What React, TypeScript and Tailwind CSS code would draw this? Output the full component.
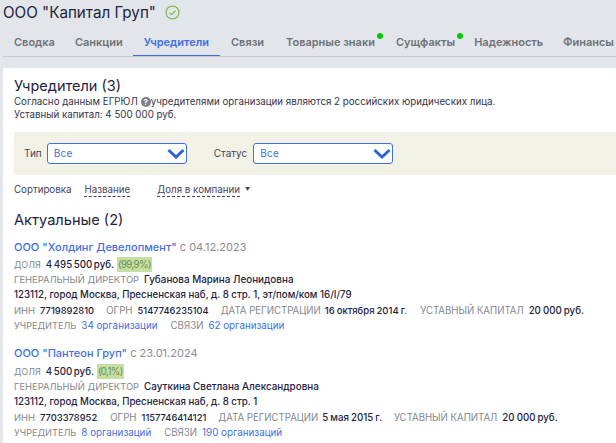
import React from "react";

const font = { fontFamily: "Inter, 'Noto Sans', sans-serif" };

function Tab({ label, active, dot, className }: { label: string; active?: boolean; dot?: boolean; className: string }) {
  return (
    <div className={`relative shrink-0 h-[29px] pt-[7px] text-[11px] leading-[16px] font-semibold whitespace-nowrap ${active ? "text-[#3f6fe0] border-b border-[#3f6fe0]" : "text-[#6e7378]"} ${className}`}>
      {label}
      {dot && <span className="absolute top-[6px] right-[-8px] w-[6px] h-[6px] rounded-full bg-[#00cc00]" />}
    </div>
  );
}

function Select() {
  return (
    <div className="flex items-center justify-between w-[140px] h-[21px] border border-[#3f6fe0] rounded-[3px] bg-white pl-[6px] pr-[1px] text-[10px] tracking-[0.3px] text-[#3f6fe0]">
      <span>Все</span>
      <svg width="18" height="11" viewBox="0 0 18 11" fill="none">
        <path d="M1.5 2 L9 9 L16.5 2" stroke="#2f64d8" strokeWidth="3" />
      </svg>
    </div>
  );
}

const L = ({ children, className = "text-[9.4px]" }: { children: React.ReactNode; className?: string }) => (
  <span className={`text-[#84878c] ${className}`}>{children}</span>
);
const V = ({ children, className = "" }: { children: React.ReactNode; className?: string }) => (
  <span className={`text-[#23233f] font-medium ${className}`}>{children}</span>
);
const A = ({ children, className = "" }: { children: React.ReactNode; className?: string }) => (
  <span className={`text-[#3f6fe0] ${className}`}>{children}</span>
);

function Row({ children, className = "" }: { children: React.ReactNode; className?: string }) {
  return <div className={`flex h-[15px] leading-[15px] whitespace-nowrap ${className}`}>{children}</div>;
}

export default function App() {
  return (
    <div style={font} className="w-[616px] h-[443px] overflow-hidden bg-[#e2e5e9] text-[#23233f]">
      <div className="flex items-center h-[25px] pl-[3px]">
        <span className="text-[15.2px] leading-[25px] whitespace-nowrap">ООО "Капитал Груп"</span>
        <svg className="ml-[9px]" width="15" height="15" viewBox="0 0 15 15" fill="none">
          <circle cx="7.5" cy="7.5" r="6.5" stroke="#6db33f" strokeWidth="1.1" />
          <path d="M4.6 7.6 L6.8 9.6 L10.5 5.6" stroke="#6db33f" strokeWidth="1.1" />
        </svg>
      </div>
      <div className="flex h-[32px] ml-[3px] pt-[2px] border-b border-[#c8cacd]">
        <Tab label="Сводка" className="ml-[11px]" />
        <Tab label="Санкции" className="ml-[20px]" />
        <Tab label="Учредители" active className="ml-[10px] px-[11px]" />
        <Tab label="Связи" className="ml-[11px]" />
        <Tab label="Товарные знаки" dot className="ml-[22px]" />
        <Tab label="Сущфакты" dot className="ml-[21px]" />
        <Tab label="Надежность" className="ml-[19px]" />
        <Tab label="Финансы" className="ml-[20px]" />
      </div>
      <div className="mt-[11px] ml-[3px] h-[376px] bg-white pl-[11px] pt-[8px]">
        <div className="text-[14.5px] leading-[20px]">Учредители (3)</div>
        <div className="flex items-center text-[9.75px] leading-[12px] h-[12px] whitespace-nowrap text-[#33334a]">
          Согласно данным ЕГРЮЛ
          <span className="inline-flex items-center justify-center w-[10px] h-[10px] rounded-full bg-[#7d8288] text-white text-[8px] font-bold ml-[3px]">?</span>
          учредителями организации являются 2 российских юридических лица.
        </div>
        <div className="text-[9.75px] leading-[12px] mt-[1px] text-[#33334a]">Уставный капитал: 4 500 000 руб.</div>

        <div className="flex items-center h-[43px] mt-[11px] bg-[#f1f1e6] text-[10px] text-[#44445a]">
          <span className="ml-[10px] mr-[5px]">Тип</span>
          <Select />
          <span className="ml-[27px] mr-[6px]">Статус</span>
          <Select />
        </div>

        <div className="flex items-center h-[14px] mt-[8px] text-[9.75px] text-[#44445a] whitespace-nowrap">
          <span>Сортировка</span>
          <span className="ml-[13px] leading-[12px] border-b border-dashed border-[#44445a]">Название</span>
          <span className="ml-[27px] leading-[12px] border-b border-dashed border-[#44445a]">Доля в компании</span>
          <span className="ml-[5px] text-[5px]">▼</span>
        </div>

        <div className="text-[14.6px] leading-[20px] mt-[13px]">Актуальные (2)</div>

        <div className="text-[9.7px] mt-[9px]">
          <div className="h-[17px] text-[11px] leading-[17px] whitespace-nowrap">
            <A className="font-medium">ООО "Холдинг Девелопмент"</A>
            <span className="text-[#8a8d92]"> с 04.12.2023</span>
          </div>
          <Row className="mt-[1px]">
            <L className="text-[9px]">ДОЛЯ</L>
            <V className="ml-[5px] [word-spacing:-1px]">4 495 500 руб.</V>
            <span className="ml-[3px] px-[1px] bg-[#c3e0a0] text-[#6b8a55] tracking-[-0.6px]">(99,9%)</span>
          </Row>
          <Row><L>ГЕНЕРАЛЬНЫЙ ДИРЕКТОР</L><V className="ml-[5px] text-[9.9px]">Губанова Марина Леонидовна</V></Row>
          <Row><V>123112, город Москва, Пресненская наб, д. 8 стр. 1, эт/пом/ком 16/I/79</V></Row>
          <Row className="mt-[1px]">
            <L>ИНН</L><V className="ml-[5px] text-[9.4px]">7719892810</V>
            <L className="ml-[12px]">ОГРН</L><V className="ml-[5px] text-[9.3px]">5147746235104</V>
            <L className="ml-[12px] text-[9.65px]">ДАТА РЕГИСТРАЦИИ</L><V className="ml-[4px] text-[9.5px] [word-spacing:-0.5px]">16 октября 2014 г.</V>
            <L className="ml-[13px] text-[9.65px]">УСТАВНЫЙ КАПИТАЛ</L><V className="ml-[5px] [word-spacing:-0.5px]">20 000 руб.</V>
          </Row>
          <Row>
            <L className="text-[9.2px]">УЧРЕДИТЕЛЬ</L><A className="ml-[5px] text-[9.8px]">34 организации</A>
            <L className="ml-[13px]">СВЯЗИ</L><A className="ml-[5px] text-[9.8px]">62 организации</A>
          </Row>
        </div>

        <div className="text-[9.7px] mt-[12px]">
          <div className="h-[17px] text-[11px] leading-[17px] whitespace-nowrap">
            <A className="font-medium">ООО "Пантеон Груп"</A>
            <span className="text-[#8a8d92]"> с 23.01.2024</span>
          </div>
          <Row className="mt-[2px]">
            <L className="text-[9px]">ДОЛЯ</L>
            <V className="ml-[5px] [word-spacing:-1px]">4 500 руб.</V>
            <span className="ml-[3px] px-[1px] bg-[#c3e0a0] text-[#6b8a55] tracking-[-0.6px]">(0,1%)</span>
          </Row>
          <Row><L>ГЕНЕРАЛЬНЫЙ ДИРЕКТОР</L><V className="ml-[5px] text-[9.9px]">Сауткина Светлана Александровна</V></Row>
          <Row><V>123112, город Москва, Пресненская наб, д. 8 стр. 1</V></Row>
          <Row className="mt-[1px]">
            <L>ИНН</L><V className="ml-[5px] text-[9.4px]">7703378952</V>
            <L className="ml-[13px]">ОГРН</L><V className="ml-[5px] text-[9.3px]">1157746414121</V>
            <L className="ml-[12px] text-[9.65px]">ДАТА РЕГИСТРАЦИИ</L><V className="ml-[4px] [word-spacing:-0.5px]">5 мая 2015 г.</V>
            <L className="ml-[12px] text-[9.65px]">УСТАВНЫЙ КАПИТАЛ</L><V className="ml-[5px] [word-spacing:-0.5px]">20 000 руб.</V>
          </Row>
          <Row>
            <L className="text-[9.2px]">УЧРЕДИТЕЛЬ</L><A className="ml-[5px] text-[9.8px]">8 организаций</A>
            <L className="ml-[13px]">СВЯЗИ</L><A className="ml-[5px] text-[9.8px]">190 организаций</A>
          </Row>
        </div>
      </div>
    </div>
  );
}
